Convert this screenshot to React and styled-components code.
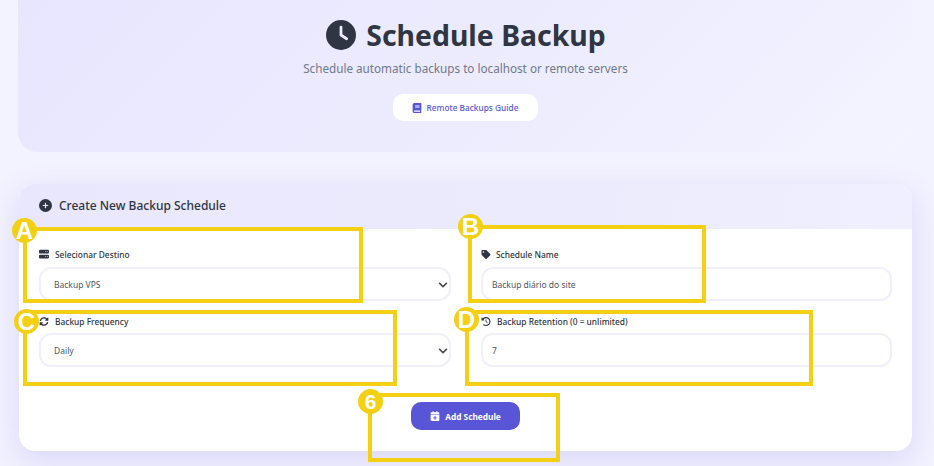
import React from "react";
import styled, { createGlobalStyle } from "styled-components";
import { FaBook, FaTag, FaSyncAlt, FaChevronDown } from "react-icons/fa";
import { FaClock, FaCirclePlus, FaServer, FaClockRotateLeft, FaCalendarPlus } from "react-icons/fa6";

const Global = createGlobalStyle`
  html, body { margin: 0; padding: 0; height: 100%; }
  body {
    width: 934px;
    height: 466px;
    overflow: hidden;
    font-family: "Noto Sans", "Open Sans", sans-serif;
    background: #f3f2ff;
  }
`;

const Page = styled.div`
  position: relative;
  width: 934px;
  height: 466px;
  padding: 0 22px 0 18px;
  box-sizing: border-box;
  overflow: hidden;
`;

const Hero = styled.header`
  height: 152px;
  border-radius: 0 0 20px 20px;
  background: linear-gradient(135deg, #e8e6ff 0%, #edecfe 55%, #f4f3ff 100%);
  display: flex;
  flex-direction: column;
  align-items: center;
  padding-top: 16px;
  box-sizing: border-box;
`;

const Title = styled.h1`
  margin: 0 0 0 2px;
  display: flex;
  align-items: center;
  gap: 10px;
  font-size: 28.4px;
  line-height: 38px;
  font-weight: 700;
  color: #2f3542;
`;

const Subtitle = styled.p`
  margin: 4px 0 0 1px;
  font-size: 11.7px;
  line-height: 20px;
  color: #6f7a8c;
`;

const GuideLink = styled.a`
  margin-top: 16px;
  width: 145px;
  height: 27px;
  border-radius: 10px;
  background: #fff;
  color: #5856d6;
  display: flex;
  align-items: center;
  justify-content: center;
  gap: 5px;
  font-size: 8.3px;
  font-weight: 500;
`;

const Card = styled.section`
  margin: 32px 0 0 1px;
  height: 267px;
  border-radius: 16px;
  background: #fff;
  overflow: hidden;
  box-shadow: 0 10px 30px rgba(88, 86, 214, 0.17);
`;

const CardHeader = styled.div`
  height: 45px;
  box-sizing: border-box;
  padding: 0 0 2px 20px;
  background: linear-gradient(100deg, #e9e7fd 0%, #ecebfd 60%, #f0effe 100%);
  display: flex;
  align-items: center;
  gap: 7px;
  font-size: 12px;
  font-weight: 500;
  color: #2f3542;
`;

const FormGrid = styled.div`
  display: grid;
  grid-template-columns: 412px 411px;
  column-gap: 30px;
  padding: 0 20px;
`;

const Field = styled.div`
  display: flex;
  flex-direction: column;
  height: ${(p) => p.$h}px;
  justify-content: flex-end;
`;

const Label = styled.label`
  display: flex;
  align-items: center;
  gap: ${(p) => p.$gap || 6}px;
  height: 16px;
  margin-bottom: ${(p) => p.$mb || 4}px;
  font-size: 8.4px;
  font-weight: 500;
  color: #2f3542;

  svg {
    width: 10px;
    flex: none;
  }
`;

const Control = styled.div`
  position: relative;
  height: 34px;
  box-sizing: border-box;
  border: 2px solid #f0effc;
  border-radius: 12px;
  display: flex;
  align-items: center;
  padding-left: ${(p) => p.$pad}px;
  font-size: 8.5px;
  color: #4f5665;
  background: #fff;
`;

const Chevron = styled(FaChevronDown)`
  position: absolute;
  right: 1px;
  top: 11px;
  width: 10px;
  height: 10px;
  color: #4a4a4a;
`;

const Actions = styled.div`
  display: flex;
  justify-content: center;
  margin-top: 35px;
`;

const AddButton = styled.button`
  width: 109px;
  height: 28px;
  border: 0;
  border-radius: 10px;
  background: #5856d6;
  color: #fff;
  display: flex;
  align-items: center;
  justify-content: center;
  gap: 5px;
  font-family: inherit;
  font-size: 8.3px;
  font-weight: 700;
`;

const Marker = styled.div`
  position: absolute;
  left: ${(p) => p.$x}px;
  top: ${(p) => p.$y}px;
  width: ${(p) => p.$w}px;
  height: ${(p) => p.$h}px;
  box-sizing: border-box;
  border: 4px solid #f3d013;
  pointer-events: none;
`;

const Badge = styled.span`
  position: absolute;
  left: ${(p) => p.$x}px;
  top: ${(p) => p.$y}px;
  width: 25px;
  height: 25px;
  border-radius: 50%;
  background: #f3d013;
  color: #fff;
  display: flex;
  align-items: center;
  justify-content: center;
  font-family: "Liberation Sans", sans-serif;
  font-size: ${(p) => p.$size || 24}px;
  font-weight: 700;
`;

export default function App() {
  return (
    <>
      <Global />
      <Page>
        <Hero>
          <Title>
            <FaClock size={30} />
            Schedule Backup
          </Title>
          <Subtitle>Schedule automatic backups to localhost or remote servers</Subtitle>
          <GuideLink>
            <FaBook size={10} />
            Remote Backups Guide
          </GuideLink>
        </Hero>
        <Card>
          <CardHeader>
            <FaCirclePlus size={13} />
            Create New Backup Schedule
          </CardHeader>
          <FormGrid>
            <Field $h={72}>
              <Label $mb={5}><FaServer size={10} />Selecionar Destino</Label>
              <Control $pad={13}>Backup VPS<Chevron /></Control>
            </Field>
            <Field $h={72}>
              <Label $mb={5} $gap={5}><FaTag size={9} />Schedule Name</Label>
              <Control $pad={9}>Backup diário do site</Control>
            </Field>
            <Field $h={66}>
              <Label><FaSyncAlt size={9} />Backup Frequency</Label>
              <Control $pad={13}>Daily<Chevron /></Control>
            </Field>
            <Field $h={66}>
              <Label><FaClockRotateLeft size={9} />Backup Retention (0 = unlimited)</Label>
              <Control $pad={9}>7</Control>
            </Field>
          </FormGrid>
          <Actions>
            <AddButton><FaCalendarPlus size={10} />Add Schedule</AddButton>
          </Actions>
        </Card>
        <Marker $x={23} $y={227} $w={340} $h={76}><Badge $x={-15} $y={-13}>A</Badge></Marker>
        <Marker $x={468} $y={225} $w={238} $h={78}><Badge $x={-14} $y={-15}>B</Badge></Marker>
        <Marker $x={23} $y={310} $w={374} $h={76}><Badge $x={-13} $y={-5}>C</Badge></Marker>
        <Marker $x={465} $y={310} $w={348} $h={76}><Badge $x={-15} $y={-7}>D</Badge></Marker>
        <Marker $x={368} $y={393} $w={192} $h={69}><Badge $x={-14} $y={-8} $size={21}>6</Badge></Marker>
      </Page>
    </>
  );
}
